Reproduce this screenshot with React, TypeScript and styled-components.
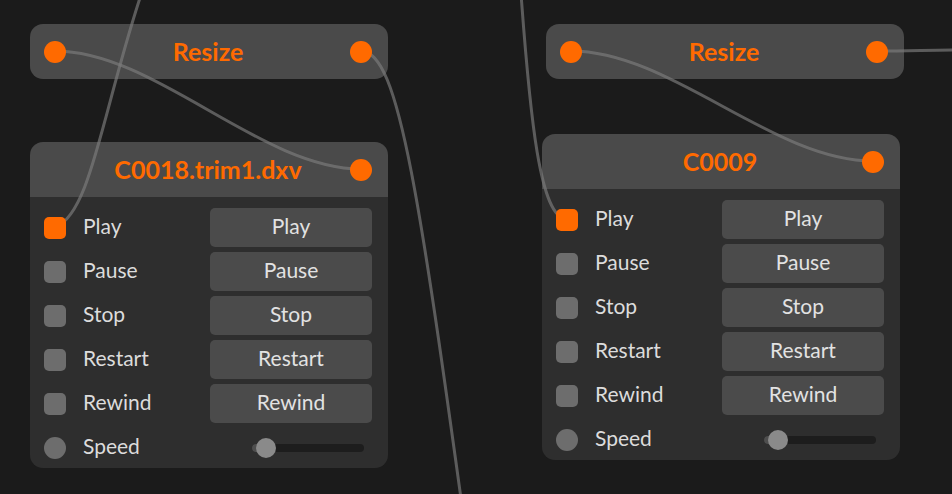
import React from "react";
import styled, { createGlobalStyle } from "styled-components";

const ORANGE = "#ff6a00";

const GlobalStyle = createGlobalStyle`
  html, body { margin: 0; padding: 0; background: #1b1b1b; overflow: hidden; }
  * { box-sizing: border-box; }
`;

const Canvas = styled.div`
  position: relative;
  width: 952px;
  height: 494px;
  overflow: hidden;
  background: #1b1b1b;
  font-family: Lato, "Open Sans", "Liberation Sans", sans-serif;
`;

const Wires = styled.svg`
  position: absolute;
  left: 0;
  top: 0;
  z-index: 1;
  pointer-events: none;
`;

const Wire = styled.path`
  fill: none;
  stroke: #7c7c7c;
  stroke-opacity: 0.68;
  stroke-width: 3;
  stroke-linecap: round;
`;

const NodeBox = styled.div<{ $x: number; $y: number }>`
  position: absolute;
  left: ${(p) => p.$x}px;
  top: ${(p) => p.$y}px;
  width: 358px;
`;

const ResizeBar = styled.div`
  display: grid;
  grid-template-columns: 22px 1fr 22px;
  align-items: center;
  height: 55px;
  padding: 0 16px 0 14px;
  background: #4a4a4a;
  border-radius: 13px;
`;

const Title = styled.div`
  text-align: center;
  color: ${ORANGE};
  font-weight: 700;
  font-size: 25px;
  line-height: 1;
  padding-bottom: 1px;
`;

const Port = styled.span`
  position: relative;
  z-index: 2;
  width: 22px;
  height: 22px;
  border-radius: 50%;
  background: ${ORANGE};
`;

const Header = styled.div`
  display: grid;
  grid-template-columns: 22px 1fr 22px;
  align-items: center;
  height: 55px;
  padding: 0 16px 0 14px;
  background: #4a4a4a;
  border-radius: 13px 13px 0 0;
`;

const Body = styled.div`
  display: flex;
  flex-direction: column;
  gap: 5px;
  padding: 11px 16px 1px 14px;
  background: #2e2e2e;
  border-radius: 0 0 13px 13px;
`;

const Row = styled.div`
  display: grid;
  grid-template-columns: 22px 1fr 162px;
  column-gap: 17px;
  align-items: center;
  height: 39px;
`;

const Socket = styled.span<{ $on?: boolean; $round?: boolean }>`
  position: relative;
  z-index: 2;
  width: 22px;
  height: 22px;
  border-radius: ${(p) => (p.$round ? "50%" : "5px")};
  background: ${(p) => (p.$on ? ORANGE : "#6d6d6d")};
`;

const Label = styled.span`
  color: #dcdcdc;
  font-size: 21px;
  line-height: 1;
  padding-bottom: 4px;
`;

const Button = styled.div`
  display: flex;
  align-items: center;
  justify-content: center;
  height: 39px;
  padding-bottom: 5px;
  border-radius: 5px;
  background: #4b4b4b;
  color: #e2e2e2;
  font-size: 21px;
  line-height: 1;
`;

const SliderTrack = styled.div`
  position: relative;
  margin: 0 8px 0 42px;
  height: 8px;
  border-radius: 4px;
  background: #1d1d1d;
`;

const SliderFill = styled.div`
  height: 8px;
  border-radius: 4px 0 0 4px;
  background: #4e4e4e;
`;

const Thumb = styled.span`
  position: absolute;
  top: -6px;
  width: 20px;
  height: 20px;
  margin-left: -10px;
  border-radius: 50%;
  background: #8a8a8a;
`;

const ACTIONS = ["Play", "Pause", "Stop", "Restart", "Rewind"];

function ResizeNode({ x, y }: { x: number; y: number }) {
  return (
    <NodeBox $x={x} $y={y}>
      <ResizeBar>
        <Port />
        <Title>Resize</Title>
        <Port />
      </ResizeBar>
    </NodeBox>
  );
}

function VideoNode({ x, y, name, speed }: { x: number; y: number; name: string; speed: number }) {
  return (
    <NodeBox $x={x} $y={y}>
      <Header>
        <span />
        <Title>{name}</Title>
        <Port />
      </Header>
      <Body>
        {ACTIONS.map((a) => (
          <Row key={a}>
            <Socket $on={a === "Play"} />
            <Label>{a}</Label>
            <Button>{a}</Button>
          </Row>
        ))}
        <Row>
          <Socket $round />
          <Label>Speed</Label>
          <SliderTrack>
            <SliderFill style={{ width: `${speed}px` }} />
            <Thumb style={{ left: `${speed}px` }} />
          </SliderTrack>
        </Row>
      </Body>
    </NodeBox>
  );
}

export default function App() {
  return (
    <>
      <GlobalStyle />
      <Canvas>
        <ResizeNode x={30} y={24} />
        <VideoNode x={30} y={142} name="C0018.trim1.dxv" speed={14} />
        <ResizeNode x={546} y={24} />
        <VideoNode x={542} y={134} name="C0009" speed={14} />
        <Wires width={952} height={494} viewBox="0 0 952 494">
          <Wire d="M 55 51 C 155 51, 261 169, 361 169" />
          <Wire d="M 146 -20 C 104 100, 92 215, 55 227" />
          <Wire d="M 361 51 C 400 51, 420 200, 475 600" />
          <Wire d="M 571 51 C 671 51, 773 161, 873 161" />
          <Wire d="M 520 -20 C 530 120, 540 219, 567 219" />
          <Wire d="M 877 51 C 910 51, 930 50, 960 50" />
        </Wires>
      </Canvas>
    </>
  );
}
